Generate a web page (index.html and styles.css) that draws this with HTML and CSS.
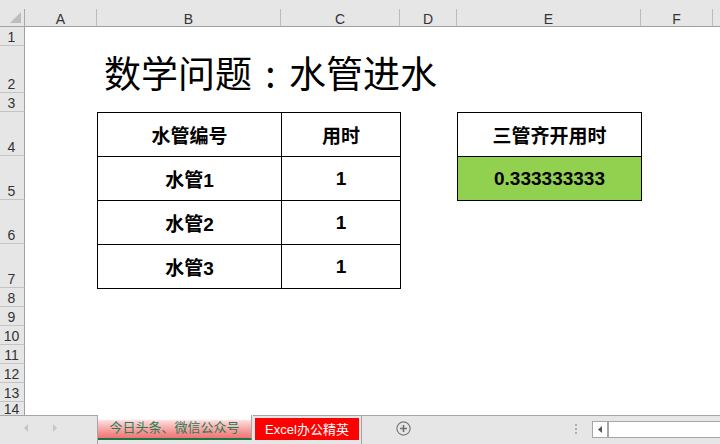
FILE: index.html
```html
<!DOCTYPE html>
<html lang="zh-CN">
<head>
<meta charset="utf-8">
<title>数学问题：水管进水</title>
<link rel="stylesheet" href="styles.css">
</head>
<body>
<div class="app">
  <div class="top-strip"></div>
  <div class="sheet">
    <div class="corner"><span class="corner-tri"></span></div>
    <div class="col-h">A</div>
    <div class="col-h">B</div>
    <div class="col-h">C</div>
    <div class="col-h">D</div>
    <div class="col-h">E</div>
    <div class="col-h">F</div>
    <div class="col-h col-h-last"></div>

    <div class="row-h">1</div>
    <div class="row-h">2</div>
    <div class="row-h">3</div>
    <div class="row-h">4</div>
    <div class="row-h">5</div>
    <div class="row-h">6</div>
    <div class="row-h">7</div>
    <div class="row-h">8</div>
    <div class="row-h">9</div>
    <div class="row-h">10</div>
    <div class="row-h">11</div>
    <div class="row-h">12</div>
    <div class="row-h">13</div>
    <div class="row-h row-h-last">14</div>

    <div class="title">数学问题<span class="colon">:</span>水管进水</div>

    <div class="tbl tbl-pipes">
      <div class="cell">水管编号</div>
      <div class="cell">用时</div>
      <div class="cell">水管1</div>
      <div class="cell">1</div>
      <div class="cell">水管2</div>
      <div class="cell">1</div>
      <div class="cell">水管3</div>
      <div class="cell">1</div>
    </div>

    <div class="tbl tbl-result">
      <div class="cell">三管齐开用时</div>
      <div class="cell cell-green">0.333333333</div>
    </div>
  </div>

  <div class="tabbar">
    <div class="nav">
      <span class="nav-left"></span>
      <span class="nav-right"></span>
    </div>
    <div class="tab-active">今日头条、微信公众号</div>
    <div class="tab-wrap"><div class="tab-red">Excel办公精英</div></div>
    <div class="tab-rest">
      <svg class="plus" width="15" height="15" viewBox="0 0 15 15">
        <circle cx="7.5" cy="7.5" r="6.6" fill="none" stroke="#7a7a7a" stroke-width="1.2"/>
        <path d="M7.5 4v7M4 7.5h7" stroke="#6f6f6f" stroke-width="1.6" fill="none"/>
      </svg>
      <div class="grip"><span></span><span></span><span></span></div>
      <div class="hscroll">
        <div class="hs-btn"><span class="hs-arrow"></span></div>
        <div class="hs-track"></div>
      </div>
    </div>
  </div>
</div>
</body>
</html>
```
FILE: styles.css
```css
html, body {
  margin: 0;
  padding: 0;
}
body {
  width: 720px;
  height: 444px;
  overflow: hidden;
  background: #ffffff;
  font-family: "Liberation Sans", "Noto Sans CJK SC", sans-serif;
  color: #000;
}
.app {
  display: flex;
  flex-direction: column;
  width: 720px;
  height: 444px;
}
.top-strip {
  flex: none;
  height: 9px;
  background: #e6e6e6;
}
.sheet {
  flex: none;
  height: 406px;
  display: grid;
  grid-template-columns: 25px 72px 184px 119px 57px 184px 72px 1fr;
  grid-template-rows: 18px 19px 47px 19px 44px 44px 44px 44px 19px 19px 19px 19px 19px 19px 1fr;
  background: #ffffff;
  overflow: hidden;
}
.corner {
  background: #e6e6e6;
  border-right: 1px solid #a9a9a9;
  border-bottom: 1px solid #a0a0a0;
  display: flex;
  justify-content: flex-end;
  align-items: flex-end;
  padding: 0 3px 3px 0;
}
.corner-tri {
  width: 11px;
  height: 11px;
  background: #bdbdbd;
  clip-path: polygon(100% 0, 100% 100%, 0 100%);
}
.col-h {
  background: #e6e6e6;
  border-right: 1px solid #bcbcbc;
  border-bottom: 1px solid #a0a0a0;
  display: flex;
  align-items: center;
  justify-content: center;
  font-size: 14px;
  line-height: 14px;
  color: #333333;
  padding-top: 2px;
}
.col-h-last {
  border-right: none;
}
.row-h {
  grid-column: 1;
  background: #e6e6e6;
  border-right: 1px solid #a0a0a0;
  border-bottom: 1px solid #c4c4c4;
  display: flex;
  align-items: flex-end;
  justify-content: center;
  font-size: 14px;
  line-height: 14px;
  color: #333333;
  padding: 0 1px 1px 0;
}
.row-h-last {
  align-items: flex-start;
  line-height: 12px;
  padding: 1px 1px 0 0;
  border-bottom: none;
}
.title {
  grid-column: 3 / 9;
  grid-row: 3;
  align-self: end;
  font-family: "Noto Sans CJK SC", sans-serif;
  font-size: 37px;
  line-height: 37px;
  padding: 0 0 2px 7px;
  white-space: nowrap;
  color: #000;
}
.colon {
  display: inline-block;
  width: 37px;
  text-align: center;
}
.tbl {
  display: grid;
  grid-auto-rows: 44px;
  border-top: 1px solid #000;
  border-left: 1px solid #000;
  align-self: start;
  justify-self: start;
}
.tbl-pipes {
  grid-column: 3 / 5;
  grid-row: 5 / 9;
  grid-template-columns: 184px 119px;
}
.tbl-result {
  grid-column: 6 / 7;
  grid-row: 5 / 7;
  grid-template-columns: 184px;
}
.cell {
  border-right: 1px solid #000;
  border-bottom: 1px solid #000;
  display: flex;
  align-items: center;
  justify-content: center;
  font-weight: bold;
  font-size: 19px;
  background: #ffffff;
}
.cell-green {
  background: #92d050;
}
.tabbar {
  flex: none;
  height: 29px;
  display: flex;
  align-items: flex-start;
  background: #e6e6e6;
}
.nav {
  flex: none;
  box-sizing: border-box;
  width: 98px;
  height: 29px;
  border-top: 1px solid #a6a6a6;
  border-right: 1px solid #a6a6a6;
  display: flex;
  align-items: center;
  padding: 0 0 4px 24px;
}
.nav-left {
  width: 4px;
  height: 8px;
  background: #c6c6c6;
  clip-path: polygon(100% 0, 100% 100%, 0 50%);
}
.nav-right {
  width: 4px;
  height: 8px;
  margin-left: 25px;
  background: #c6c6c6;
  clip-path: polygon(0 0, 100% 50%, 0 100%);
}
.tab-active {
  flex: none;
  box-sizing: border-box;
  width: 154px;
  height: 25px;
  border-right: 1px solid #a6a6a6;
  border-bottom: 2px solid #217346;
  background: linear-gradient(to bottom, #ffffff 0px, #ffffff 4px, #fcd9d9 6px, #f59a9a 16px, #f07474 23px);
  color: #2a7a55;
  font-size: 13px;
  line-height: 13px;
  display: flex;
  align-items: center;
  justify-content: center;
  padding: 1px 0 0 0;
  white-space: nowrap;
}
.tab-wrap {
  flex: none;
  box-sizing: border-box;
  width: 109px;
  height: 29px;
  margin-left: 1px;
  border-top: 1px solid #a6a6a6;
  border-right: 1px solid #a6a6a6;
  padding: 2px 2px 0 2px;
}
.tab-red {
  width: 104px;
  height: 22px;
  background: #ff0000;
  color: #ffffff;
  font-size: 13px;
  line-height: 13px;
  display: flex;
  align-items: center;
  justify-content: center;
  white-space: nowrap;
}
.tab-rest {
  flex: 1;
  height: 29px;
  box-sizing: border-box;
  border-top: 1px solid #a6a6a6;
  display: flex;
  align-items: flex-start;
}
.plus {
  flex: none;
  margin: 5px 0 0 34px;
}
.grip {
  flex: none;
  margin: 8px 0 0 164px;
  display: flex;
  flex-direction: column;
  gap: 2px;
}
.grip span {
  width: 2px;
  height: 2px;
  background: #adadad;
}
.hscroll {
  flex: 1;
  margin: 5px 0 0 15px;
  height: 17px;
  box-sizing: border-box;
  border: 1px solid #a6a6a6;
  border-right: none;
  background: #ffffff;
  display: flex;
}
.hs-btn {
  flex: none;
  width: 14px;
  display: flex;
  align-items: center;
  justify-content: center;
  border-right: 2px solid #a6a6a6;
}
.hs-arrow {
  width: 4px;
  height: 7px;
  background: #555555;
  clip-path: polygon(100% 0, 100% 100%, 0 50%);
}
.hs-track {
  flex: 1;
  background: #ffffff;
}
```
